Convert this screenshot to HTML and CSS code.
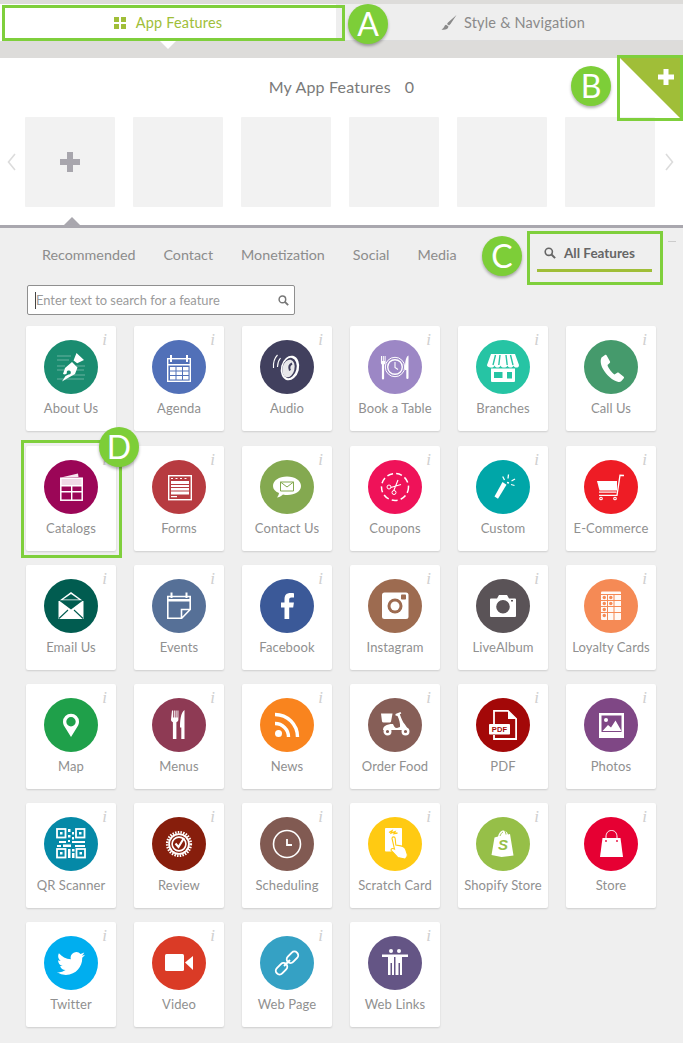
FILE: index.html
```html
<!DOCTYPE html>
<html lang="en">
<head>
<meta charset="utf-8">
<title>App Features</title>
<link rel="stylesheet" href="styles.css">
</head>
<body>
<div class="page">
  <div class="strip"></div>
  <div class="tabs">
    <div class="tab tab-on">
      <svg class="tab-ico" width="12" height="12" viewBox="0 0 12 12"><path class="f-olive" d="M0 0h5v5H0zM7 0h5v5H7zM0 7h5v5H0zM7 7h5v5H7z"/></svg>
      <span>App Features</span>
    </div>
    <div class="tab tab-off">
      <svg class="tab-ico" width="16" height="15" viewBox="0 0 16 15"><path class="f-gray" d="M15.5 0L7 7.5 6 9l2 1.5 1.5-1.5zM5 9.8C3 10 4 13 0.5 14.5 4 15.3 8 14 7.3 11.2z"/></svg>
      <span>Style &amp; Navigation</span>
    </div>
  </div>
  <div class="band"><i class="arrow-down"></i></div>
  <section class="panel">
    <h2 class="panel-title"><span>My App Features</span><span>0</span></h2>
    <div class="carousel">
      <svg class="chev" width="9" height="18" viewBox="0 0 9 18"><path d="M8 1L1.5 9 8 17" fill="none" stroke="#dcdcdc" stroke-width="1.6"/></svg>
      <div class="slots">
        <div class="slot"><svg width="20" height="20" viewBox="0 0 20 20"><path class="f-plus" d="M7 0h6v7h7v6h-7v7H7v-7H0V7h7z"/></svg></div>
        <div class="slot"></div>
        <div class="slot"></div>
        <div class="slot"></div>
        <div class="slot"></div>
        <div class="slot"></div>
      </div>
      <svg class="chev chev-r" width="9" height="18" viewBox="0 0 9 18"><path d="M1 1l6.5 8L1 17" fill="none" stroke="#dcdcdc" stroke-width="1.6"/></svg>
    </div>
    <i class="arrow-up"></i>
  </section>
  <nav class="filters">
    <a>Recommended</a><a>Contact</a><a>Monetization</a><a>Social</a><a>Media</a>
    <a class="all">
      <svg width="12" height="12" viewBox="0 0 12 12"><circle cx="4.8" cy="4.8" r="3.6" fill="none" stroke="#666" stroke-width="1.6"/><path d="M7.5 7.5l3.6 3.6" stroke="#666" stroke-width="2"/></svg>
      <b>All Features</b>
    </a>
  </nav>
  <div class="search">
    <span class="caret"></span><span class="ph">Enter text to search for a feature</span>
    <svg width="11" height="11" viewBox="0 0 12 12"><circle cx="4.8" cy="4.8" r="3.6" fill="none" stroke="#777" stroke-width="1.6"/><path d="M7.5 7.5l3.6 3.6" stroke="#777" stroke-width="2"/></svg>
  </div>
  <div class="grid">

    <div class="card"><i class="info">i</i><div class="ico c-about"><svg viewBox="0 0 54 54"><g class="ln"><path d="M13 16h14M13 20h12M13 26h8M13 30h7M32 26h9M32 30h8M28 35h13M13 39h27"/></g><path class="w" d="M29.500 20.500L32.500 13 40 20l-6.800 3.300zM28 22l5.500 5.500-2.500 6.500-8 4.500-5 3 3.500-5.500 3-1.500a2 2 0 1 0-1.500-1.200L21 34.500l-2-0.500 2-6z"/></svg></div><span>About Us</span></div>

    <div class="card"><i class="info">i</i><div class="ico c-agenda"><svg viewBox="0 0 54 54"><rect class="o" x="15.700" y="18.700" width="22.600" height="22.600" stroke-width="1.400"/><path class="w" d="M18 15h2v7h-2zM34 15h2v7h-2zM15 24h24v1.500H15z"/><path class="w" d="M18 27h5.500v3.500H18zM24.500 27H30v3.500h-5.500zM31 27h5.500v3.500H31zM18 31.500h5.500V35H18zM24.500 31.500H30V35h-5.500zM31 31.500h5.500V35H31zM18 36h5.500v3.500H18zM24.500 36H30v3.500h-5.500zM31 36h5.500v3.500H31z"/></svg></div><span>Agenda</span></div>

    <div class="card"><i class="info">i</i><div class="ico c-audio"><svg viewBox="0 0 54 54"><ellipse class="w" cx="30" cy="28" rx="9" ry="12.500" transform="rotate(14 30 28)"/><ellipse cx="29.500" cy="28" rx="7" ry="10.300" transform="rotate(14 29.500 28)" fill="#41405e"/><ellipse cx="28.500" cy="28.500" rx="6" ry="9" transform="rotate(14 28.500 28.500)" fill="#e8e8ea"/><path d="M32 23.500c-2 1-3.500 3.500-2 7" fill="none" stroke="#41405e" stroke-width="2"/><path class="o" stroke-width="1.100" d="M17.500 15c-3 3-4.500 7-4 13M20.500 18c-2 2.500-3 5-3 9"/></svg></div><span>Audio</span></div>

    <div class="card"><i class="info">i</i><div class="ico c-book"><svg viewBox="0 0 54 54"><circle class="o" cx="27" cy="27" r="9.700" stroke-width="1"/><circle class="o" cx="27" cy="27" r="7.300" stroke-width="1.400"/><path class="o" stroke-width="1.100" d="M27 22v5.500l3 2"/><path class="w" d="M13 16h1v5h.8v-5h1v5h.8v-5h1v6.500c0 1.300-1 1.700-1.500 2V38.500a1.100 1.100 0 0 1-2.200 0V24.500c-.6-.3-1-.7-1-2zM40.500 15.500V38a1.100 1.100 0 0 1-2.200 0V30h-1.300c0-5 0-13 3.500-14.500z"/></svg></div><span>Book a Table</span></div>

    <div class="card"><i class="info">i</i><div class="ico c-branches"><svg viewBox="0 0 54 54"><path class="w" d="M15 14h24l4 11c0 2-1 2.500-2.500 2.500-1.500 0-2.500-.5-3-2-.5 1.500-1.500 2-3 2-1.500 0-2.500-.5-3-2-.5 1.500-1.500 2-3.500 2s-3-.5-3.500-2c-.5 1.500-1.500 2-3 2s-2.500-.5-3-2c-.5 1.500-1.500 2-3 2S11 27 11 25z"/><path d="M19.500 15l-2.500 10M24 15l-1.200 10M30 15l1.200 10M34.500 15l2.500 10" stroke="#26c4a4" stroke-width="1.400"/><path class="w" fill-rule="evenodd" d="M15 28.500h24V41a1 1 0 0 1-1 1H16a1 1 0 0 1-1-1zM18 32v6h8.500v-6zM31 32v6.500h5V32z"/></svg></div><span>Branches</span></div>

    <div class="card"><i class="info">i</i><div class="ico c-call"><svg viewBox="0 0 54 54"><path class="w" d="M17.500 17.500l3.500-2.500c.8-.4 1.300-.2 1.700.5l3.300 6c.3.600.2 1.100-.3 1.500l-2.200 2c.5 2.800 4.500 8 7 9.500l2.700-1.800c.5-.3 1-.3 1.500.1l5 4c.5.500.5 1 .1 1.500l-2.600 3c-.6.600-1.700.9-2.700.7-6-1.100-12-7-15.500-13-2.200-4-3-8.500-1.500-11.500z"/></svg></div><span>Call Us</span></div>

    <div class="card"><i class="info">i</i><div class="ico c-catalogs"><svg viewBox="0 0 54 54"><path class="w" d="M17 17.500l17-4 .5 3.500z" opacity=".9"/><rect class="w" x="16.500" y="18" width="22" height="7.500" opacity=".85"/><rect class="o" x="16.800" y="18.200" width="21.400" height="22" stroke-width="1.500"/><path class="o" stroke-width="1.400" d="M17 25.700h21M17 31.800h21M27.700 25.700v14.500"/></svg></div><span>Catalogs</span></div>

    <div class="card"><i class="info">i</i><div class="ico c-forms"><svg viewBox="0 0 54 54"><rect class="o" x="16.700" y="15.700" width="22.600" height="24" stroke-width="1.400"/><path class="o" stroke-width="1" stroke-dasharray="2 2.500" d="M19 18.500h18"/><path class="w" d="M19 21h18v3H19zM19 25h18v2H19zM19 28h18v2.500H19zM19 31.500h18v3H19zM19 36h6v1.200h-6z"/></svg></div><span>Forms</span></div>

    <div class="card"><i class="info">i</i><div class="ico c-contact"><svg viewBox="0 0 54 54"><path class="w" d="M27 16.500c8 0 14 4 14 9.500s-6 9-13.500 9c-1.500 0-3 0-4.500-.5-2 2-4.500 3-6 3 1-1 1.800-2.800 2-4.500-4-1.500-6-4-6-7 0-5.500 6-9.500 14-9.500z"/><path fill="none" stroke="#84a950" stroke-width="1" d="M20.500 22h13v9h-13zM20.500 22l6.500 5 6.500-5"/></svg></div><span>Contact Us</span></div>

    <div class="card"><i class="info">i</i><div class="ico c-coupons"><svg viewBox="0 0 54 54"><circle class="o" cx="27" cy="27" r="13.500" stroke-width="1.500" stroke-dasharray="6 3.200"/><circle class="o" cx="21" cy="27" r="2" stroke-width="1"/><circle class="o" cx="26" cy="32.500" r="2" stroke-width="1"/><path class="o" stroke-width="1.100" d="M22.800 27.500L33 24.500M25.800 30.500L30 20"/></svg></div><span>Coupons</span></div>

    <div class="card"><i class="info">i</i><div class="ico c-custom"><svg viewBox="0 0 54 54"><path class="w" d="M26.500 22l4 2.700-8.500 14-3.500-2.200z"/><path class="o" stroke-width="1.300" d="M28.500 20l-1.800-3.500M32 18.500l.5-4M35.500 21l3.500-2M35 24.500l3.500 1M31 22.500l2 .5"/></svg></div><span>Custom</span></div>

    <div class="card"><i class="info">i</i><div class="ico c-ecom"><svg viewBox="0 0 54 54"><path class="w" d="M13 21h20v9.500H15.500z"/><path class="w" d="M15 31.500h17.500v1.200H15z"/><path class="o" stroke-width="1.300" d="M40 15.500l-4-.2-3 20H15"/><circle class="o" cx="17" cy="38.500" r="1.300" stroke-width="1.100"/><circle class="o" cx="31" cy="38.500" r="1.300" stroke-width="1.100"/></svg></div><span>E-Commerce</span></div>

    <div class="card"><i class="info">i</i><div class="ico c-email"><svg viewBox="0 0 54 54"><path class="w" d="M27 13l11.500 8.500h-23z"/><path class="w" d="M14.500 22h25v18h-25z"/><path fill="#015c50" d="M15 21.500h24L27 30.500zM19 20.500l8-5.500 8 5.500z"/><path d="M15 39.500l9-8.500M39 39.500l-9-8.500" stroke="#015c50" stroke-width="1.100" fill="none"/></svg></div><span>Email Us</span></div>

    <div class="card"><i class="info">i</i><div class="ico c-events"><svg viewBox="0 0 54 54"><path class="o" stroke-width="1.600" d="M15.800 17.500h22.400v13l-8.500 8.700H15.800zM29.500 39v-8.500h8.500"/><path class="w" d="M15 20h24v2.500H15zM18.500 13.500h2V19h-2zM33.500 13.500h2V19h-2z"/></svg></div><span>Events</span></div>

    <div class="card"><i class="info">i</i><div class="ico c-fb"><svg viewBox="0 0 54 54"><path class="w" d="M24.500 40V28.500H21V23.500h3.500V20c0-4 2-6 6-6 1.500 0 3 .1 3.500.2v4.300h-2.500c-2 0-2.300 1-2.300 2.300v2.700h4.700l-.7 5h-4V40z"/></svg></div><span>Facebook</span></div>

    <div class="card"><i class="info">i</i><div class="ico c-insta"><svg viewBox="0 0 54 54"><rect class="w" x="14" y="13.500" width="26.500" height="26.500" rx="2.500"/><circle cx="27" cy="27" r="7.500" fill="#9d6b50"/><circle class="w" cx="27" cy="27" r="4.500"/><rect x="33" y="15.500" width="5" height="5" rx=".8" fill="#9d6b50"/></svg></div><span>Instagram</span></div>

    <div class="card"><i class="info">i</i><div class="ico c-live"><svg viewBox="0 0 54 54"><path class="w" fill-rule="evenodd" d="M15 19.500h6l2-3.500h8l2 3.500h6a1 1 0 0 1 1 1V37a1 1 0 0 1-1 1H15a1 1 0 0 1-1-1V20.500a1 1 0 0 1 1-1zM27 21a6.800 6.800 0 1 0 0 13.600A6.800 6.800 0 0 0 27 21z"/><rect x="35" y="21" width="2" height="1.500" fill="#5a5357"/></svg></div><span>LiveAlbum</span></div>

    <div class="card"><i class="info">i</i><div class="ico c-loyalty"><svg viewBox="0 0 54 54"><rect class="w" x="17" y="12.500" width="20" height="28.500" rx="1" opacity=".95"/><path stroke="#f58a55" stroke-width="1" d="M17 15.500h20M17 21.500h20M17 27.500h20M17 33.500h20M23.500 15v26M30 15v26" fill="none"/><g fill="#f58a55"><circle cx="20.300" cy="18.500" r="1.700"/><circle cx="26.800" cy="18.500" r="1.700"/><circle cx="20.300" cy="24.500" r="1.700"/><circle cx="26.800" cy="24.500" r="1.700"/><circle cx="20.300" cy="30.500" r="1.700"/><circle cx="20.300" cy="36.500" r="1.700"/></g></svg></div><span>Loyalty Cards</span></div>

    <div class="card"><i class="info">i</i><div class="ico c-map"><svg viewBox="0 0 54 54"><path class="w" fill-rule="evenodd" d="M27 39l-6.500-10.500c-.9-1.500-1.500-3-1.500-4.800a8 8 0 0 1 16 0c0 1.800-.6 3.300-1.500 4.800zM27 19a4.700 4.700 0 1 0 0 9.400A4.700 4.700 0 0 0 27 19z"/></svg></div><span>Map</span></div>

    <div class="card"><i class="info">i</i><div class="ico c-menus"><svg viewBox="0 0 54 54"><path class="w" d="M20 12.500h1v7h.8v-7h1v7h.8v-7h1v7h.9v-7h.9v9c0 1.500-1 2.300-2 2.800V41h-3.500V24.300c-1-.5-1.900-1.300-1.900-2.800z"/><path class="w" d="M32.500 12v29h-3.200V29.500H28c0-6 .5-15 4.500-17.500z"/></svg></div><span>Menus</span></div>

    <div class="card"><i class="info">i</i><div class="ico c-news"><svg viewBox="0 0 54 54"><circle class="w" cx="18.500" cy="35.500" r="3.500"/><path class="o" stroke-width="3.400" d="M15 25.500c7.500 0 13.500 6 13.500 13.500"/><path class="o" stroke-width="3.400" d="M15 16.500c12.500 0 22.500 10 22.500 22.500"/></svg></div><span>News</span></div>

    <div class="card"><i class="info">i</i><div class="ico c-order"><svg viewBox="0 0 54 54"><path class="w" d="M13 15.500h11.500l-1.500 8c-.2.800-.8 1-1.500 1h-6c-.8 0-1.300-.4-1.500-1z"/><path class="w" d="M15 32c0-3.500 3-6 10-6 1 2 1.500 4 4 4l3-1c.5-3-1-8-2.500-11l-2-.5v-1.500l5-2 .8 1.500-1.500.8c1.500 4 3 8 5 10l2 3 2 2.700z"/><circle cx="19.500" cy="33.500" r="2.800" fill="#865e57" stroke="#fff" stroke-width="2.400"/><circle cx="37.500" cy="33.500" r="2.800" fill="#865e57" stroke="#fff" stroke-width="2.400"/></svg></div><span>Order Food</span></div>

    <div class="card"><i class="info">i</i><div class="ico c-pdf"><svg viewBox="0 0 54 54"><path class="o" stroke-width="1.800" d="M18 26V12.900h14l8.100 8V41H18v-4"/><path class="w" d="M32 13l8 8h-8z"/><rect class="w" x="13" y="26" width="21" height="10.500" rx=".8"/><text x="23.500" y="34" class="pdf-t">PDF</text></svg></div><span>PDF</span></div>

    <div class="card"><i class="info">i</i><div class="ico c-photos"><svg viewBox="0 0 54 54"><path class="w" fill-rule="evenodd" d="M15 15h25v25H15zM17.500 17.500v16.500h20V17.500z"/><circle class="w" cx="22" cy="22" r="2"/><path class="w" d="M18.500 33l5.500-6 3 2.500 4.500-7 6 10.500z"/></svg></div><span>Photos</span></div>

    <div class="card"><i class="info">i</i><div class="ico c-qr"><svg viewBox="0 0 54 54"><g fill="none" stroke="#fff" stroke-width="1.800"><rect x="13" y="12" width="8.500" height="8.500"/><rect x="32" y="12" width="8.500" height="8.500"/><rect x="13" y="32" width="8.500" height="8.500"/><rect x="32.500" y="32" width="8.500" height="8.500"/></g><path class="w" d="M16 15h2.500v2.500H16zM35 15h2.500v2.500H35zM16 35h2.500v2.500H16zM35.500 35h2.500v2.500h-2.500zM24 12h2.500v3H24zM28 15h2v2.500h-2zM24 18h2.500v2.500H24zM28 20h2v2.500h-2zM24 23h2v2h-2zM28 24h13v2H28zM15 24h7v2h-7zM13 28h4v2h-4zM19 27.500h8v2.500h-8zM31 28h10v2H31zM24 32h2.500v9H24zM28 32h2.500v2.500H28zM28 36h2.500v5H28z"/></svg></div><span>QR Scanner</span></div>

    <div class="card"><i class="info">i</i><div class="ico c-review"><svg viewBox="0 0 54 54"><circle class="w" cx="27" cy="27" r="10.800"/><circle class="o" cx="27" cy="27" r="11.800" stroke-width="2.600" stroke-dasharray="1.500 1.200"/><circle cx="27" cy="27" r="9" fill="#871e0c"/><circle class="o" cx="27" cy="27" r="6.900" stroke-width="1.600"/><path class="o" stroke-width="2.100" d="M23.500 26.500l3 3.500 5.500-9"/></svg></div><span>Review</span></div>

    <div class="card"><i class="info">i</i><div class="ico c-sched"><svg viewBox="0 0 54 54"><circle class="o" cx="27" cy="27" r="13.500" stroke-width="1.600"/><path class="o" stroke-width="1.800" d="M27 22v6h5"/></svg></div><span>Scheduling</span></div>

    <div class="card"><i class="info">i</i><div class="ico c-scratch"><svg viewBox="0 0 54 54"><rect class="w" x="17" y="11" width="17" height="23.500" rx=".8"/><path d="M21 15.500l3-1.800-1 2.500 4-1.500-1 2 3.500-.7" fill="none" stroke="#ffca12" stroke-width="1.300"/><path class="w" stroke="#ffca12" stroke-width="1.100" d="M24 21.500c0-2.200 3-2.200 3.200 0l.6 6.500 5 .9c3 .5 4.500 2 5 4l1.500 4.500c.3 1.500-.5 3-1.500 4l-1 .7-7-1.500c-1.500-2-4-4.500-6.500-7-1-1.500 1-2.800 3.200-1.500z"/></svg></div><span>Scratch Card</span></div>

    <div class="card"><i class="info">i</i><div class="ico c-shopify"><svg viewBox="0 0 54 54"><path class="w" d="M18.500 20.500l3.500-1c.8-3 2.500-5.500 4.500-6 1.200-.3 2 .3 2.500.9 1.800 0 2.500 1.500 3 3l2-.5 3.500 21.500-12 1.700-10-2z"/><path d="M24 19c.8-2 1.800-3.500 3-4M29 14.500c.7 1 1 2 1 3" stroke="#96bf48" stroke-width=".9" fill="none"/><text x="27" y="33" class="shop-t">S</text></svg></div><span>Shopify Store</span></div>

    <div class="card"><i class="info">i</i><div class="ico c-store"><svg viewBox="0 0 54 54"><path class="w" d="M18.500 21h18l2.500 19H16z"/><path class="o" stroke-width="1" d="M22 24v-4c0-4 2-6.500 5.500-6.500S33 16 33 20v4"/><circle cx="22" cy="24" r=".9" fill="#e60033"/><circle cx="33" cy="24" r=".9" fill="#e60033"/></svg></div><span>Store</span></div>

    <div class="card"><i class="info">i</i><div class="ico c-twitter"><svg viewBox="0 0 54 54"><g transform="translate(13 13.500) scale(1.170)"><path class="w" d="M23.953 4.570a10 10 0 0 1-2.825.775 4.958 4.958 0 0 0 2.163-2.723c-.951.555-2.005.959-3.127 1.184a4.920 4.920 0 0 0-8.384 4.482C7.690 8.095 4.067 6.130 1.640 3.162a4.822 4.822 0 0 0-.666 2.475c0 1.710.870 3.213 2.188 4.096a4.904 4.904 0 0 1-2.228-.616v.06a4.923 4.923 0 0 0 3.946 4.827 4.996 4.996 0 0 1-2.212.085 4.936 4.936 0 0 0 4.604 3.417 9.867 9.867 0 0 1-6.102 2.105c-.39 0-.779-.023-1.170-.067a13.995 13.995 0 0 0 7.557 2.209c9.053 0 13.998-7.496 13.998-13.985 0-.21 0-.42-.015-.63A9.935 9.935 0 0 0 24 4.590z"/></g></svg></div><span>Twitter</span></div>

    <div class="card"><i class="info">i</i><div class="ico c-video"><svg viewBox="0 0 54 54"><rect class="w" x="13" y="18" width="19" height="17" rx="1.500"/><path class="w" d="M33 26.500l8-6.500v14z"/></svg></div><span>Video</span></div>

    <div class="card"><i class="info">i</i><div class="ico c-web"><svg viewBox="0 0 54 54"><g class="o" stroke-width="1.900"><rect x="26" y="17.500" width="13" height="7.500" rx="3.700" transform="rotate(-45 32.500 21.300)"/><rect x="15" y="29" width="13" height="7.500" rx="3.700" transform="rotate(-45 21.500 32.700)"/><path d="M24 30l6-6"/></g></svg></div><span>Web Page</span></div>

    <div class="card"><i class="info">i</i><div class="ico c-links"><svg viewBox="0 0 54 54"><circle class="w" cx="23" cy="15" r="2"/><circle class="w" cx="31" cy="15" r="2"/><path class="w" d="M14 18.500h26V21h-6v18h-2V27h-1.500v12h-3V21h-1.500v18h-2V27H22.500v12H20V21h-6z"/></svg></div><span>Web Links</span></div>

  </div>

  <span class="mark mark-a"></span>
  <span class="mark mark-b"><svg class="corner" width="60" height="60" viewBox="0 0 60 60"><path d="M0 0h60v60z" class="f-olive"/><path d="M43.500 11h5v5.500H54v5h-5.500V27h-5v-5.500H38v-5h5.500z" fill="#fff"/></svg></span>
  <span class="mark mark-c"></span>
  <span class="mark mark-d"></span>
  <span class="dash"></span>
  <span class="badge badge-a">A</span>
  <span class="badge badge-b">B</span>
  <span class="badge badge-c">C</span>
  <span class="badge badge-d">D</span>
</div>
</body>
</html>
```
FILE: styles.css
```css
* { box-sizing: border-box; }
html, body { margin: 0; padding: 0; }
body { background: #efefef; font-family: "Lato", "Liberation Sans", sans-serif; }
.page { position: relative; width: 683px; height: 1043px; overflow: hidden; background: #efefef; color: #8c8c8c; }

.f-olive { fill: #a0be38; }
.f-gray { fill: #8a8a8a; }
.f-plus { fill: #a8a6ad; }

.strip { height: 4px; background: #dddcda; }
.tabs { display: flex; height: 37px; }
.tab { display: flex; align-items: center; justify-content: center; gap: 10px; font-size: 14.500px; letter-spacing: .2px; }
.tab-on { width: 336px; background: #fff; color: #a0be38; }
.tab-off { flex: 1; background: #eeeeee; color: #8a8a8a; border-bottom: 1px solid #dcdcdc; padding-left: 7px; gap: 7px; }
.tab-ico { display: block; }

.band { position: relative; height: 17px; background: #dddcda; }
.arrow-down { position: absolute; left: 160px; top: 0; border: 8px solid transparent; border-top-color: #fff; border-bottom: 0; }

.panel { position: relative; height: 167px; background: #fff; }
.panel-title { margin: 0; height: 59px; padding-top: 19px; display: flex; justify-content: center; gap: 14px; font-size: 16px; line-height: 20px; font-weight: 400; color: #7a7a7a; letter-spacing: .2px; }
.carousel { display: flex; align-items: center; }
.chev { flex: none; margin-left: 7px; margin-right: 9px; }
.chev-r { margin-left: 10px; margin-right: 0; }
.slots { display: flex; gap: 18px; }
.slot { width: 90px; height: 90px; background: #f2f2f2; display: flex; align-items: center; justify-content: center; border-radius: 1px; }
.arrow-up { position: absolute; left: 64px; bottom: 0; border: 8px solid transparent; border-bottom-color: #a9a7ae; border-top: 0; }

.filters { display: flex; align-items: center; gap: 28px; height: 60px; padding: 0 31px 5px 42px; border-top: 3px solid #a9a7ae; font-size: 14.300px; color: #8c8c8c; }
.filters a { display: block; white-space: nowrap; }
.filters .all { margin-left: auto; display: flex; align-items: center; gap: 8px; color: #666; font-size: 13.500px; width: 115px; height: 36px; padding-left: 7px; border-bottom: 3px solid #a0be38; }
.filters .all b { font-weight: 700; }

.search { display: flex; align-items: center; margin-left: 27px; width: 268px; height: 30px; background: #fff; border: 1px solid #8f8f8f; border-radius: 2px; padding: 0 5px 0 7px; }
.caret { width: 1px; height: 17px; background: #444; flex: none; }
.ph { flex: 1; font-size: 12.900px; color: #9b9b9b; white-space: nowrap; }

.grid { display: grid; grid-template-columns: repeat(6, 90px); grid-template-rows: 106px repeat(5, 105px); column-gap: 18px; row-gap: 14px; margin: 11px 0 0 26px; }
.card { position: relative; height: 105px; background: #fff; border-radius: 2px; box-shadow: 0 1px 2px rgba(0,0,0,.14); display: flex; flex-direction: column; align-items: center; padding-top: 14px; font-size: 13px; letter-spacing: .1px; color: #909090; white-space: nowrap; }
.card span { display: block; margin-top: 6px; line-height: 17px; }
.info { position: absolute; top: 4px; right: 9px; font-family: "Liberation Serif", serif; font-size: 17px; line-height: 19px; font-style: italic; color: #cfcfcf; }
.ico { width: 54px; height: 54px; border-radius: 50%; flex: none; }
.ico svg { display: block; width: 54px; height: 54px; }
.w { fill: #fff; }
.o { fill: none; stroke: #fff; }
.ln { fill: none; stroke: rgba(255,255,255,.35); stroke-width: 1; }
.pdf-t { font-family: "Liberation Sans", sans-serif; font-size: 7.500px; font-weight: 700; fill: #a30808; text-anchor: middle; }
.shop-t { font-family: "Liberation Sans", sans-serif; font-size: 15px; font-weight: 700; font-style: italic; fill: #96bf48; text-anchor: middle; }

.c-about { background: #1a8c70; } .c-agenda { background: #5170b8; } .c-audio { background: #41405e; }
.c-book { background: #9c87c5; } .c-branches { background: #26c4a4; } .c-call { background: #459a6c; }
.c-catalogs { background: #9b0657; } .c-forms { background: #b73b40; } .c-contact { background: #84a950; }
.c-coupons { background: #ef1259; } .c-custom { background: #00a6a8; } .c-ecom { background: #ee1c25; }
.c-email { background: #015c50; } .c-events { background: #567097; } .c-fb { background: #3b5998; }
.c-insta { background: #9d6b50; } .c-live { background: #5a5357; } .c-loyalty { background: #f58a55; }
.c-map { background: #1fa04a; } .c-menus { background: #8e3a54; } .c-news { background: #f9841e; }
.c-order { background: #865e57; } .c-pdf { background: #a30808; } .c-photos { background: #7f4785; }
.c-qr { background: #0589a7; } .c-review { background: #871e0c; } .c-sched { background: #815a52; }
.c-scratch { background: #ffca12; } .c-shopify { background: #96bf48; } .c-store { background: #e60033; }
.c-twitter { background: #00aeef; } .c-video { background: #da3b26; } .c-web { background: #35a1c4; }
.c-links { background: #645585; }

.mark { position: absolute; border: 3px solid #7fcf3c; }
.mark-a { left: 2px; top: 5px; width: 343px; height: 36px; }
.mark-b { left: 617px; top: 55px; width: 66px; height: 66px; }
.mark-c { left: 527px; top: 231px; width: 136px; height: 54px; }
.mark-d { left: 21px; top: 440px; width: 101px; height: 118px; }
.corner { display: block; }
.dash { position: absolute; left: 668px; top: 241px; width: 8px; height: 1px; background: #ccc; }

.badge { position: absolute; width: 40px; height: 40px; border-radius: 50%; background: #7dce38; color: #fff; font-size: 32px; line-height: 40px; text-align: center; font-weight: 400; box-shadow: 0 2px 3px rgba(0,0,0,.3); }
.badge-a { left: 348px; top: 4px; }
.badge-b { left: 571px; top: 66px; }
.badge-c { left: 482px; top: 236px; }
.badge-d { left: 99px; top: 427px; }
```
